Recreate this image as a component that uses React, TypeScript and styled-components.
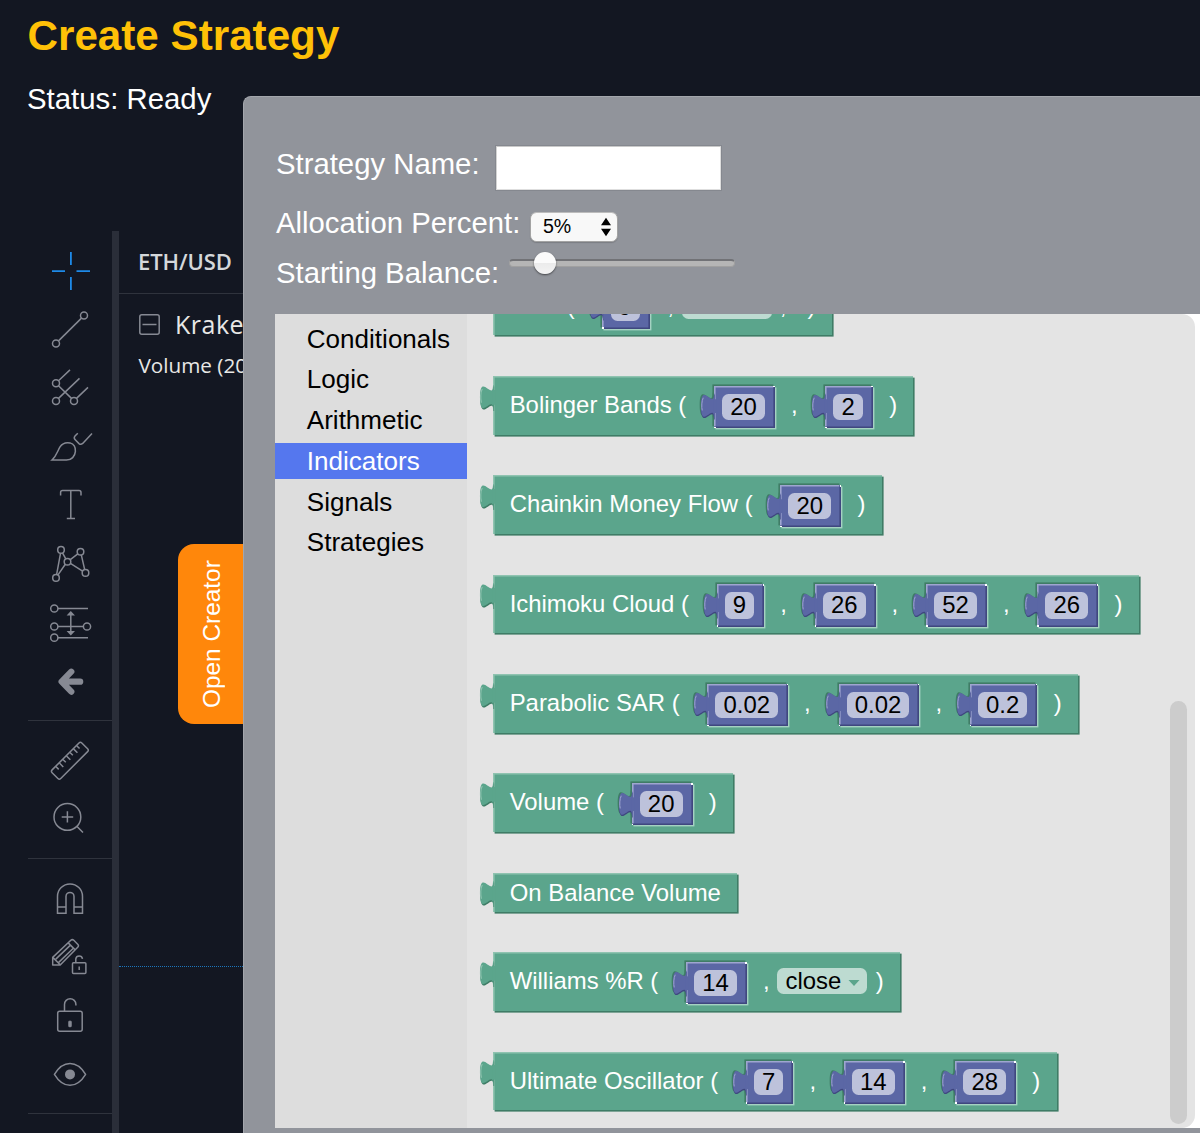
import React from 'react';
import styled, { createGlobalStyle, css } from 'styled-components';

const GlobalStyle = createGlobalStyle`
  * { box-sizing: border-box; }
  html, body { margin: 0; padding: 0; background: #131722; }
  body { overflow: hidden; font-family: "Liberation Sans", Arial, Helvetica, sans-serif; }
`;

const color = {
  page: '#131722',
  rule: '#2a2e39',
  icon: '#868993',
  panel: '#91949b',
  green: '#5ba58c',
  greenDark: '#3f7c66',
  greenLight: '#8fc3b0',
  blue: '#5b67a5',
  blueDark: '#3f477f',
  blueLight: '#9fa6d0',
};

const Page = styled.div`
  display: flex;
  width: 1200px;
  height: 1133px;
  overflow: hidden;
  background: ${color.page};
`;

const LeftColumn = styled.div`
  position: relative;
  display: flex;
  flex-direction: column;
  flex: none;
  width: 243px;
  padding-top: 11px;
`;

const Title = styled.h1`
  margin: 0 0 0 27.5px;
  font-size: 42.2px;
  line-height: 50px;
  font-weight: 700;
  white-space: nowrap;
  color: #ffc107;
`;

const Status = styled.p`
  margin: 21px 0 115px 27px;
  font-size: 29.35px;
  line-height: 34px;
  color: #fff;
  white-space: nowrap;
`;

const Chart = styled.div`
  display: flex;
  flex: 1;
  min-height: 0;
  overflow: hidden;
`;

const ToolBar = styled.div`
  flex: none;
  width: 119px;
  padding-left: 28px;
  border-right: 7px solid ${color.rule};
`;

const ToolGroup = styled.div`
  display: flex;
  flex-direction: column;
  align-items: center;
  padding: 10px 0;
  border-bottom: 1.5px solid #2f333d;
`;

const Tool = styled.svg<{ $active?: boolean }>`
  display: block;
  width: 52px;
  height: 58.6px;
  fill: none;
  stroke: ${(p) => (p.$active ? '#1e8ae8' : color.icon)};
  stroke-width: ${(p) => (p.$active ? 1.8 : 1.5)};
`;

const ChartPane = styled.div`
  flex: 1;
  min-width: 0;
  overflow: hidden;
  font-family: "Open Sans", "Noto Sans", sans-serif;
  white-space: nowrap;
`;

const Symbol = styled.div`
  height: 63px;
  padding-left: 19px;
  border-bottom: 1.5px solid #2f333d;
  font-size: 22px;
  font-weight: 600;
  line-height: 60.5px;
  letter-spacing: -0.1px;
  color: #d5d8db;
`;

const SeriesRow = styled.div`
  display: flex;
  align-items: center;
  gap: 15.5px;
  height: 60px;
  padding-left: 19.5px;
  font-size: 25px;
  letter-spacing: 0.5px;
  color: #e8e8e6;
`;

const Collapse = styled.svg`
  flex: none;
  width: 21px;
  height: 21px;
  fill: none;
  stroke: ${color.icon};
  stroke-width: 1.5;
`;

const StudyRow = styled.div`
  height: 30px;
  margin-top: -4px;
  padding-left: 19.5px;
  font-size: 20.7px;
  line-height: 30px;
  color: #e8e8e6;
`;

const PriceLine = styled.div`
  margin-top: 586px;
  border-top: 1.6px dotted #1b76bd;
`;

const OpenCreator = styled.button`
  position: absolute;
  top: 543.5px;
  right: 0;
  width: 65.5px;
  height: 180.5px;
  padding: 0;
  border: 0;
  border-radius: 16px 0 0 16px;
  background: #ff870b;
  color: #fff;
  font: 24.4px/66px "Liberation Sans", Arial, sans-serif;
`;

const TabText = styled.span`
  display: block;
  width: 67px;
  height: 180px;
  line-height: 67px;
  text-align: center;
  writing-mode: vertical-rl;
  transform: rotate(180deg);
`;

const Panel = styled.main`
  display: flex;
  flex-direction: column;
  flex: 1;
  min-width: 0;
  margin-top: 96px;
  padding: 47px 0 5px 31px;
  border: solid #a3a6ac;
  border-width: 1px 0 0 1px;
  border-radius: 8px 0 0 0;
  background: ${color.panel};
`;

const FormRow = styled.label<{ $height: number; $line: number }>`
  display: flex;
  flex: none;
  align-items: flex-start;
  height: ${(p) => p.$height}px;
  padding-left: 1px;
  font-size: 29.3px;
  line-height: ${(p) => p.$line}px;
  color: #fff;
  white-space: nowrap;
`;

const NameInput = styled.input`
  width: 227px;
  height: 46px;
  margin: 0.5px 0 0 15px;
  padding: 0 6px;
  border: 2px solid;
  border-color: #c9c9c9 #dedede #dedede #d3d3d3;
  outline: 1px solid #85888f;
  outline-offset: -1px;
  background: #fff;
`;

const Picker = styled.span`
  display: flex;
  align-items: center;
  justify-content: space-between;
  width: 88px;
  height: 29.5px;
  margin: 7px 0 0 9.6px;
  padding: 0 6px 0 12px;
  border: 1px solid #a3a3a3;
  border-top-color: #bcbcbc;
  border-radius: 6.5px;
  background: #f8f8f8;
  box-shadow: 0 1px 1px rgba(0, 0, 0, 0.16);
  font-size: 19.6px;
  line-height: 26px;
  color: #000;
`;

const PickerValue = styled.span`
  margin-top: -2px;
`;

const Arrows = styled.svg`
  width: 10px;
  height: 20px;
`;

const Track = styled.span`
  display: flex;
  align-items: center;
  width: 226px;
  height: 8px;
  margin: 2.6px 0 0 9.6px;
  padding-left: 24px;
  border: 1px solid #a0a0a0;
  border-top: 2px solid #717276;
  border-radius: 4px;
  background: #b5b5b5;
`;

const Thumb = styled.span`
  flex: none;
  width: 22px;
  height: 22px;
  margin-top: -1px;
  border-radius: 50%;
  background: linear-gradient(#fbfbfb 50%, #ebebeb 50%, #f3f3f3);
  box-shadow: 0 1px 2px rgba(0, 0, 0, 0.55);
`;

const Blockly = styled.section`
  display: flex;
  flex: 1;
  min-height: 0;
  background: #fff;
  font-family: "Liberation Sans", Helvetica, Arial, sans-serif;
`;

const Toolbox = styled.nav`
  flex: none;
  width: 192px;
  padding-top: 6.3px;
  background: #ddd;
`;

const Category = styled.div<{ $selected?: boolean }>`
  height: 35.75px;
  margin-bottom: 5px;
  padding-left: 31.8px;
  font-size: 26.05px;
  line-height: 37.4px;
  color: ${(p) => (p.$selected ? '#fff' : '#000')};
  background: ${(p) => (p.$selected ? '#5577ee' : 'transparent')};
`;

const Flyout = styled.div`
  display: flex;
  flex: none;
  width: 727.5px;
  overflow: hidden;
  border-radius: 0 13px 13px 0;
  background: #e4e4e4;
`;

const BlockList = styled.div`
  flex: 1;
  min-width: 0;
  margin-top: -37.6px;
  padding-left: 26.2px;
`;

const ScrollThumb = styled.div`
  flex: none;
  width: 17px;
  height: 423.5px;
  margin: 386.5px 7.5px 0 0;
  border-radius: 9px;
  background: #ccc;
`;

const Block = styled.div<{ $short?: boolean }>`
  position: relative;
  display: flex;
  width: max-content;
  height: ${(p) => (p.$short ? 38.8 : 58.4)}px;
  margin-bottom: ${(p) => (p.$short ? 40.8 : 40.95)}px;
  padding: 0 16.2px 0 16.5px;
  font-size: 23.9px;
  line-height: ${(p) => (p.$short ? 39.6 : 57.4)}px;
  color: #fff;
  white-space: nowrap;
  background: ${color.green};
  box-shadow:
    1.6px 1.6px 0 ${color.greenDark},
    inset 1.6px 1.6px 0 ${color.greenLight};
`;

const BlockTab = styled.svg`
  position: absolute;
  left: -13.8px;
  top: 0.6px;
  width: 18px;
  height: 36px;
  overflow: visible;
`;

const corner = css`
  content: '';
  position: absolute;
  width: 1.6px;
  height: 1.6px;
  background: #fff;
`;

const NumberBlock = styled.span`
  position: relative;
  display: flex;
  flex: none;
  height: 42.4px;
  margin: 9.6px 0 0 27.6px;
  padding: 8px 10px 0 8.2px;
  background: ${color.blue};
  box-shadow:
    inset -1.6px -1.6px 0 ${color.blueDark},
    inset 1.6px 1.6px 0 ${color.blueLight},
    -1.6px -1.6px 0 ${color.greenDark},
    1.4px 1.4px 0 #a5d2c2;
  &::before { ${corner} top: 0; right: 0; }
  &::after { ${corner} bottom: 0; left: 0; }
`;

const field = css`
  height: 26.2px;
  border-radius: 6.5px;
  line-height: 25.6px;
  color: #000;
`;

const NumberField = styled.span`
  ${field}
  padding: 0 8.1px;
  background: #bdc2db;
`;

const Dropdown = styled.span`
  ${field}
  display: flex;
  align-items: center;
  gap: 6.5px;
  width: 90px;
  margin: 15.8px 0 0 7.8px;
  padding-left: 8.1px;
  background: #bddbd1;
`;

const Caret = styled.svg`
  width: 12px;
  height: 6px;
  margin-top: 3px;
  fill: ${color.green};
`;

const Comma = styled.span<{ $gap: number }>`
  width: 6.8px;
  margin-left: ${(p) => p.$gap}px;
`;

const Close = styled.span<{ $gap: number }>`
  margin-left: ${(p) => p.$gap}px;
`;

const tabPath = 'M0.4,5 V20 H0 c 0,-10 -8,8 -8,-7.5 s 8,2.5 8,-7.5 Z';

function OuterTab() {
  return (
    <BlockTab viewBox="0 0 18 36">
      <g transform="translate(14 0) scale(1.63)">
        <path d={tabPath} transform="translate(.3 .8)" fill={color.greenDark} />
        <path d={tabPath} fill={color.green} />
        <path d="M0.6,8 V17" stroke={color.green} strokeWidth="1.4" />
        <path d="M-7.1,15.8 C-7.8,13.5 -7.6,9 -6.6,7.4" fill="none" stroke={color.greenLight} strokeWidth=".7" />
      </g>
    </BlockTab>
  );
}

function InnerTab() {
  return (
    <BlockTab viewBox="0 0 18 36">
      <g transform="translate(14 0) scale(1.63)">
        <path d={tabPath} transform="translate(-.8 -.8)" fill={color.greenDark} />
        <path d={tabPath} fill={color.blueDark} transform="translate(0 .5)" />
        <path d={tabPath} fill={color.blue} transform="translate(0 -.3)" />
        <path d="M0.4,8.2 V16.6" stroke={color.blue} strokeWidth="1.7" />
        <path d="M-7.2,15 C-7.8,13 -7.5,8.8 -6.6,7.2" fill="none" stroke={color.blueLight} strokeWidth=".6" />
      </g>
    </BlockTab>
  );
}

function Num({ value }: { value: string }) {
  return (
    <NumberBlock>
      <InnerTab />
      <NumberField>{value}</NumberField>
    </NumberBlock>
  );
}

function Select() {
  return (
    <Dropdown>
      close
      <Caret viewBox="0 0 12 6"><path d="M0.5 0H11.5L6 6Z" /></Caret>
    </Dropdown>
  );
}

type Indicator = { name: string; args?: string[]; source?: boolean; trailing?: boolean };

const indicators: Indicator[] = [
  { name: 'SMA', args: ['9'], source: true, trailing: true },
  { name: 'Bolinger Bands', args: ['20', '2'] },
  { name: 'Chainkin Money Flow', args: ['20'] },
  { name: 'Ichimoku Cloud', args: ['9', '26', '52', '26'] },
  { name: 'Parabolic SAR', args: ['0.02', '0.02', '0.2'] },
  { name: 'Volume', args: ['20'] },
  { name: 'On Balance Volume' },
  { name: 'Williams %R', args: ['14'], source: true },
  { name: 'Ultimate Oscillator', args: ['7', '14', '28'] },
];

function IndicatorBlock({ name, args, source, trailing }: Indicator) {
  if (!args) {
    return (
      <Block $short>
        <OuterTab />
        {name}
      </Block>
    );
  }
  return (
    <Block>
      <OuterTab />
      <span>{name} (</span>
      {args.map((value, i) => (
        <React.Fragment key={i}>
          {i > 0 && <Comma $gap={16}>,</Comma>}
          <Num value={value} />
        </React.Fragment>
      ))}
      {source && <><Comma $gap={trailing ? 17.2 : 16}>,</Comma><Select /></>}
      {trailing && <Comma $gap={8}>,</Comma>}
      <Close $gap={trailing ? 21 : source ? 8.4 : 16.3}>)</Close>
    </Block>
  );
}

const box = '-26 -29.9 52 58.6';

function DrawingTools() {
  return (
    <ToolBar>
      <ToolGroup>
        <Tool $active viewBox={box}>
          <path d="M-18 .2H-5M6.5 .2H20M.9 -18.8V-5.8M.9 6.2V19.2" />
        </Tool>
        <Tool viewBox={box}>
          <circle cx="14" cy="-14.3" r="3.5" /><circle cx="-14" cy="13.5" r="3.5" />
          <path d="M11.5 -11.8L-11.5 11" />
        </Tool>
        <Tool viewBox={box}>
          <circle cx="-14" cy="-4.7" r="3.5" /><circle cx="-14" cy="13" r="3.5" /><circle cx="4" cy="13" r="3.5" />
          <path d="M-11.5 -7.2L0 -18M-11.5 -2.2L1.5 10.5M-11.5 10.5L9.5 -9.5M6.5 10.5L18 -.5" />
        </Tool>
        <Tool viewBox={box}>
          <path d="M-18 13.2C-13.5 9 -12.5 4 -10 0C-7.5 -4 -3.5 -4.6 0 -4C3.5 -3 5.7 0 5.4 4.5C5 9.5 1.5 13.2 -3.5 13.2Z" />
          <path d="M7.8 -13.7L5 -11Q3.5 -9.2 5 -7.3L9 -3.3Q10.8 -1.8 12.7 -3.5L22 -13.4" />
        </Tool>
        <Tool viewBox={box}>
          <path d="M-9.4 -9.3V-12.5Q-9.4 -14.4 -7.5 -14.4H9Q11 -14.4 11 -12.5V-9.3M.8 -14.4V13.5M-3.2 13.6H5" />
        </Tool>
        <Tool viewBox={box}>
          <circle cx="-9" cy="-14" r="3.3" /><circle cx="10.5" cy="-12.2" r="3.3" /><circle cx="-2.5" cy="-2.2" r="3.3" />
          <circle cx="-14" cy="14" r="3.3" /><circle cx="15.5" cy="9" r="3.3" />
          <path d="M-7.5 -11L-4.2 -5M.3 -4.2L7.8 -10M-4.7 .4L-12 11M-9.5 -10.6L-13.4 10.7M.4 -.5L12.6 7.3M11.3 -9L14.7 5.7" />
        </Tool>
        <Tool viewBox={box}>
          <circle cx="-15.7" cy="-14.4" r="3.6" /><circle cx="-15.7" cy="3.6" r="3.6" /><circle cx="17" cy="3.6" r="3.6" /><circle cx="-15.7" cy="14.8" r="3.6" />
          <path d="M-12 -14.4H18M-12 3.6H13.4M-12 14.8H18M.8 -8.4V9.6" />
          <path d="M.8 -11.9L5 -7.4H-3.4ZM.8 12.6L5 8.1H-3.4Z" fill={color.icon} stroke="none" />
        </Tool>
        <Tool viewBox={box}>
          <path d="M1.3 -9.2L-8.4 .8L1.3 10.8M-7.5 .8H10.2" strokeWidth="6.2" strokeLinecap="round" strokeLinejoin="round" />
        </Tool>
      </ToolGroup>
      <ToolGroup>
        <Tool viewBox={box}>
          <g transform="rotate(-45)">
            <rect x="-21" y="-6.3" width="42" height="12.2" rx="2" />
            <path d="M-14 -6v4M-9 -6v5.5M-4 -6v4M1 -6v5.5M6 -6v4M11 -6v5.5M15.5 -6v4" />
          </g>
        </Tool>
        <Tool viewBox={box}>
          <circle cx="-2.6" cy="-2" r="13.4" />
          <path d="M-8.3 -2H3.2M-2.6 -7.7V3.7M6.8 7.4L13 13.6" />
        </Tool>
      </ToolGroup>
      <ToolGroup>
        <Tool viewBox={box}>
          <path d="M-12.5 14.3V-2.5A12.5 12.5 0 0 1 12.5 -2.5V14.3H4V-2.5A4 4 0 0 0 -4 -2.5V14.3ZM-12.5 8H-4M4 8H12.5" />
        </Tool>
        <Tool viewBox={box} strokeLinejoin="round">
          <path d="M-17.3 7.1V-.5L.8 -17.6Q2.3 -19 3.8 -17.6L7.7 -13.6Q9.2 -12.1 7.7 -10.6L-9.8 7.1ZM-17 -.3L-9.8 6.9M-1.8 -15L5.2 -8M-14.2 1.2L.7 -13M-11.3 4.5L3.6 -9.9" />
          <rect x="2.5" y="4.9" width="13.4" height="10.6" rx="1" />
          <path d="M5.8 4.7V1A3.4 3.4 0 0 1 12.5 1M9.2 8.7V12" />
        </Tool>
        <Tool viewBox={box}>
          <rect x="-12.3" y="-4.6" width="24.5" height="20" rx="2" />
          <path d="M-5.5 -5V-11.5A5.7 5.7 0 0 1 5.9 -11.5V-10.5" />
          <rect x="-1.5" y="5" width="3" height="6" rx="1" fill={color.icon} strokeWidth=".5" />
        </Tool>
        <Tool viewBox={box}>
          <path d="M-15.6 -.5Q-9 -11.3 0 -11.3T15.6 -.5Q9 10.4 0 10.4T-15.6 -.5Z" strokeLinejoin="round" />
          <circle cx="0" cy="-.5" r="5" fill={color.icon} stroke="none" />
        </Tool>
      </ToolGroup>
    </ToolBar>
  );
}

const categories = ['Conditionals', 'Logic', 'Arithmetic', 'Indicators', 'Signals', 'Strategies'];

export default function App() {
  return (
    <Page>
      <GlobalStyle />
      <LeftColumn>
        <Title>Create Strategy</Title>
        <Status>Status: Ready</Status>
        <Chart>
          <DrawingTools />
          <ChartPane>
            <Symbol>ETH/USD</Symbol>
            <SeriesRow>
              <Collapse viewBox="0 0 21 21"><rect x=".8" y=".8" width="19.4" height="19.4" rx="2" /><path d="M3.5 10.5H17.5" /></Collapse>
              Kraken
            </SeriesRow>
            <StudyRow>Volume (20)</StudyRow>
            <PriceLine />
          </ChartPane>
        </Chart>
        <OpenCreator><TabText>Open Creator</TabText></OpenCreator>
      </LeftColumn>
      <Panel>
        <FormRow $height={61} $line={39}>Strategy Name:<NameInput /></FormRow>
        <FormRow as="div" $height={51} $line={35.4}>
          Allocation Percent:
          <Picker>
            <PickerValue>5%</PickerValue>
            <Arrows viewBox="0 0 10 20"><path d="M0 8.2L5 .8L10 8.2ZM0 11.8L5 19.2L10 11.8Z" /></Arrows>
          </Picker>
        </FormRow>
        <FormRow as="div" $height={58.4} $line={34}>
          Starting Balance:
          <Track><Thumb /></Track>
        </FormRow>
        <Blockly>
          <Toolbox>
            {categories.map((name) => (
              <Category key={name} $selected={name === 'Indicators'}>{name}</Category>
            ))}
          </Toolbox>
          <Flyout>
            <BlockList>
              {indicators.map((item) => <IndicatorBlock key={item.name} {...item} />)}
            </BlockList>
            <ScrollThumb />
          </Flyout>
        </Blockly>
      </Panel>
    </Page>
  );
}
